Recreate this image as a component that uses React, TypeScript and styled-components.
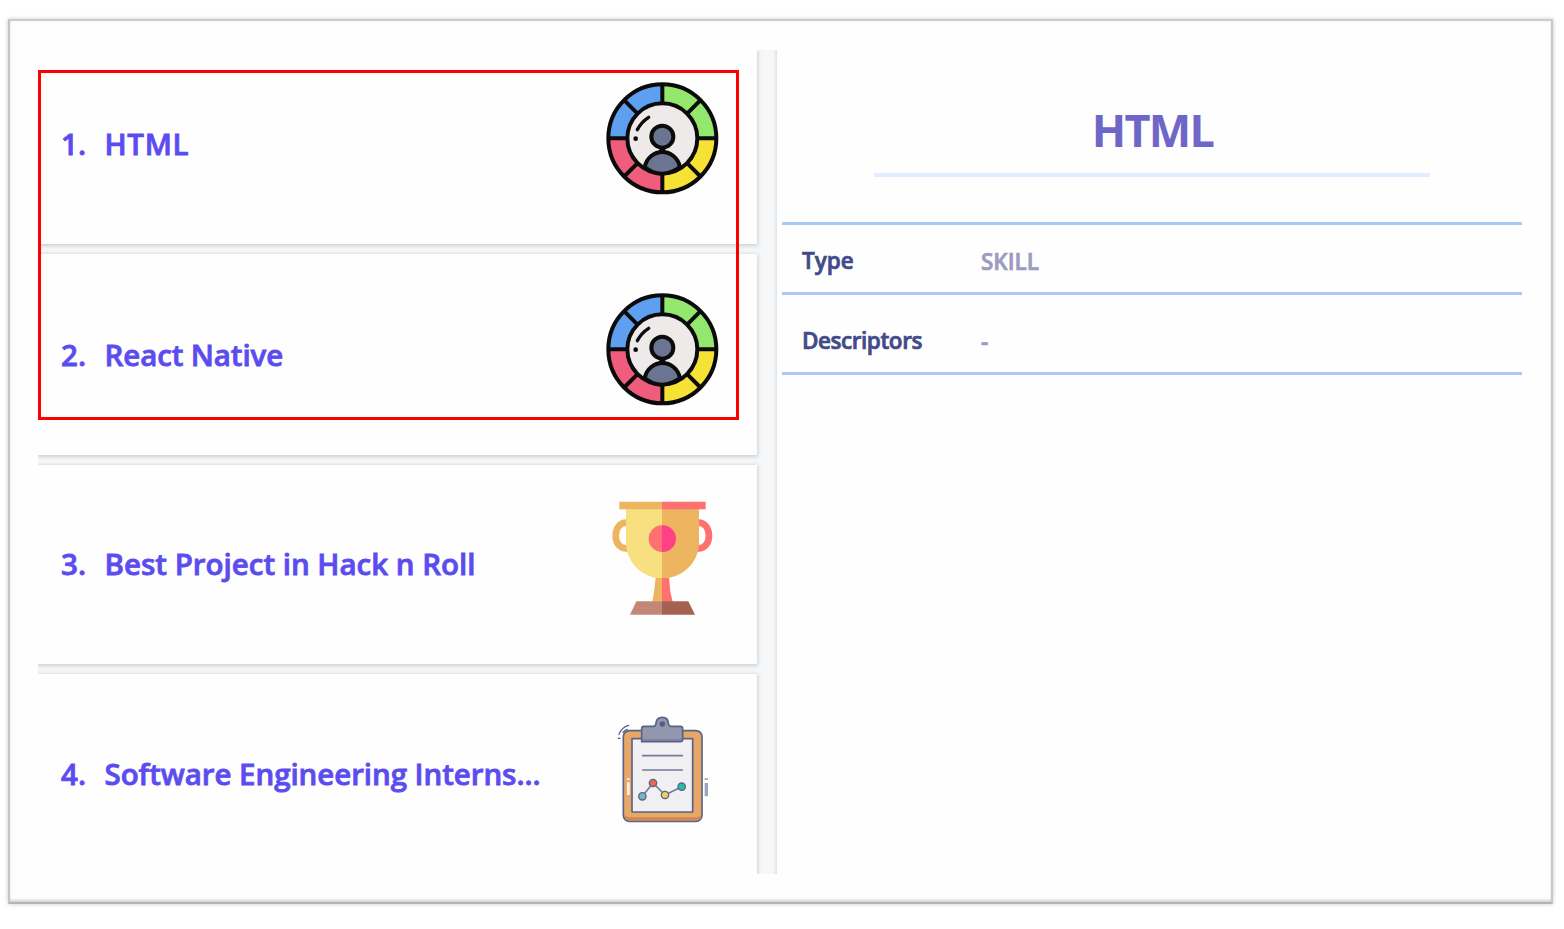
import React from 'react';
import styled, { createGlobalStyle } from 'styled-components';

const GlobalStyle = createGlobalStyle`
  * { box-sizing: border-box; }
  body {
    margin: 0;
    background: #fff;
    font-family: "Open Sans", "Noto Sans", sans-serif;
  }
`;

const Page = styled.div`
  width: 1564px;
  height: 929px;
  padding: 19px 11px 25px 8px;
  background: #fff;
`;

const Frame = styled.main`
  position: relative;
  display: flex;
  width: 1545px;
  height: 885px;
  padding: 29px 28px 28px 28px;
  background: #fefefe;
  border: 2px solid;
  border-color: #cbcbcb #c8c8c8 #b4b4b4 #c4c4c4;
  box-shadow: 0 0 4px rgba(0, 0, 0, 0.22), inset 0 -3px 3px -1px rgba(0, 0, 0, 0.16),
    inset 0 0 3px rgba(0, 0, 0, 0.06);
`;

const ListPane = styled.section`
  display: flex;
  flex-direction: column;
  width: 739px;
  height: 824px;
  gap: 10px;
  padding-right: 20px;
  background: #f6f7f9;
  box-shadow: inset -3px 0 2px -1px #e4e5e7;
  overflow: hidden;
`;

const Card = styled.article<{ $height: number }>`
  flex: none;
  display: flex;
  align-items: flex-end;
  height: ${(p) => p.$height}px;
  padding: 0 32px 44px 23px;
  background: #fefefe;
  color: #5b4cf0;
  font-size: 29.5px;
  font-weight: 600;
  line-height: 40px;
  -webkit-text-stroke: 0.8px currentColor;
  box-shadow: 0 1px 4px 1px rgba(0, 0, 0, 0.16);
`;

const Index = styled.span`
  width: 43.5px;
  margin-bottom: 36px;
`;

const Label = styled.span<{ $spacing: number }>`
  flex: 1;
  margin-bottom: 36px;
  white-space: nowrap;
  letter-spacing: ${(p) => p.$spacing}px;
`;

const Picture = styled.svg`
  flex: none;
  display: block;
  width: 125px;
  height: 125px;
`;

const Selection = styled.div`
  position: absolute;
  left: 28px;
  top: 49px;
  width: 701px;
  height: 350px;
  border: 3px solid #ff0000;
  pointer-events: none;
`;

const DetailPane = styled.section`
  display: flex;
  flex-direction: column;
  width: 745px;
  padding: 50px 0 0 5px;
`;

const Title = styled.h1`
  align-self: center;
  width: 556px;
  height: 77px;
  margin: 0 0 45px;
  padding-left: 1px;
  border-bottom: 4px solid #e4ecff;
  color: #6f67c8;
  text-align: center;
  font-size: 45px;
  font-weight: 700;
  letter-spacing: -1.7px;
  line-height: 60px;
`;

const Table = styled.dl`
  margin: 0;
  border-top: 3px solid #a9c8fb;
`;

const Row = styled.div<{ $height: number }>`
  display: flex;
  align-items: flex-end;
  height: ${(p) => p.$height}px;
  padding: 0 0 16px 20px;
  border-bottom: 3px solid #a9c8fb;
  font-size: 22.5px;
  font-weight: 600;
  line-height: 30px;
  -webkit-text-stroke: 0.7px currentColor;
`;

const Term = styled.dt<{ $spacing?: number }>`
  width: 179px;
  color: #434a8a;
  letter-spacing: ${(p) => p.$spacing ?? 0}px;
`;

const Value = styled.dd`
  position: relative;
  top: 1px;
  margin: 0;
  color: #9c9bc2;
`;

const SkillWheel = () => (
  <Picture viewBox="0 0 375 375">
    <circle cx="187" cy="190" r="160" fill="#eeeaea" />
    <g fill="none" strokeWidth="52">
      <path d="M51 190A136 136 0 0 1 187 54" stroke="#5f9ff0" />
      <path d="M187 54A136 136 0 0 1 323 190" stroke="#92e76c" />
      <path d="M323 190A136 136 0 0 1 187 326" stroke="#f5e234" />
      <path d="M187 326A136 136 0 0 1 51 190" stroke="#f05c7b" />
    </g>
    <g fill="none" stroke="#0b0b0b" strokeWidth="12">
      <circle cx="187" cy="190" r="162" />
      <circle cx="187" cy="190" r="105" />
      <path d="M187 30V84M187 296V350M27 190H81M293 190H347M74 77L112 115M262 265L300 303M300 77L262 115M112 265L74 303" />
      <path d="M134 276C140 248 163 231 187 231S234 248 240 276Q214 295 187 296T134 276Z" fill="#6b7490" />
      <path d="M187 216V232" strokeWidth="18" />
      <circle cx="187" cy="185" r="33" fill="#6b7490" />
      <path d="M112 164Q125 140 146 127" strokeLinecap="round" strokeWidth="10" />
    </g>
    <circle cx="107" cy="191" r="7" fill="#0b0b0b" />
  </Picture>
);

const Trophy = () => (
  <Picture viewBox="-15 0 375 375">
    <path d="M68 83C20 78 20 166 68 160" fill="none" stroke="#edb55f" strokeWidth="20" />
    <path d="M276 83C324 78 324 166 276 160" fill="none" stroke="#ff7070" strokeWidth="20" />
    <path d="M63 42H171V250C111 250 63 200 63 143Z" fill="#f8e080" />
    <path d="M171 42H282V143C282 200 234 250 171 250Z" fill="#edb55f" />
    <path d="M43 20H171V43H43Z" fill="#edb55f" />
    <path d="M171 20H302V43H171Z" fill="#ff7070" />
    <path d="M152 249H171V320H142L147 290Z" fill="#edb55f" />
    <path d="M171 249H192L196 290L203 320H171Z" fill="#ff7070" />
    <path d="M94 319H171V359H75Z" fill="#c38778" />
    <path d="M171 319H250L270 359H171Z" fill="#a66153" />
    <path d="M171 91A40 40 0 0 0 171 171Z" fill="#ff7070" />
    <path d="M171 91H173A40 40 0 0 1 173 171H171Z" fill="#ff3f86" />
  </Picture>
);

const Clipboard = () => (
  <Picture viewBox="-30 -15 375 375">
    <g stroke="#5a6289" strokeWidth="5" strokeLinejoin="round" strokeLinecap="round">
      <rect x="40" y="62" width="236" height="272" rx="18" fill="#e9a766" />
      <path d="M44 312V316Q44 332 58 332H258Q274 332 274 316V312Q270 322 258 322H58Q46 322 44 312Z" fill="#cf8754" stroke="none" />
      <rect x="66" y="86" width="182" height="220" fill="#f0f0f2" />
      <path d="M95 95V56Q95 49 102 49H130Q138 49 138 39Q140 22 157 22T175 39Q176 49 183 49H211Q218 49 218 56V88Q218 95 211 95Z" fill="#9297ad" />
      <path d="M98 90H214" stroke="#777e9b" strokeWidth="4" />
      <circle cx="157" cy="42" r="6" fill="#4d5681" />
      <path d="M98 137H217M98 180H217" stroke="#737a9c" strokeWidth="5" />
      <path d="M97 259L129 219L165 255L215 230" fill="none" stroke="#737a9c" />
      <circle cx="97" cy="259" r="11" fill="#77b8bd" strokeWidth="4" />
      <circle cx="129" cy="219" r="11" fill="#f26450" strokeWidth="4" />
      <circle cx="165" cy="255" r="11" fill="#f5ce55" strokeWidth="4" />
      <circle cx="215" cy="230" r="11" fill="#25bfa6" strokeWidth="4" />
      <path d="M27 73Q35 52 56 46M39 67Q44 60 52 58" fill="none" strokeWidth="4" />
    </g>
    <path d="M24 85H31" stroke="#4d5681" strokeWidth="4" />
    <path d="M55 217V255M55 205V210" stroke="#fff0df" strokeWidth="8" />
    <path d="M289 219V259M289 205V210" stroke="#9da3bf" strokeWidth="10" />
  </Picture>
);

const items = [
  { label: 'HTML', height: 194, spacing: 0.7, Icon: SkillWheel },
  { label: 'React Native', height: 201, spacing: -0.1, Icon: SkillWheel },
  { label: 'Best Project in Hack n Roll', height: 199, spacing: 0, Icon: Trophy },
  { label: 'Software Engineering Interns...', height: 200, spacing: -0.06, Icon: Clipboard },
];

export default function App() {
  return (
    <Page>
      <GlobalStyle />
      <Frame>
        <ListPane>
          {items.map(({ label, height, spacing, Icon }, i) => (
            <Card key={label} $height={height}>
              <Index>{i + 1}.</Index>
              <Label $spacing={spacing}>{label}</Label>
              <Icon />
            </Card>
          ))}
        </ListPane>
        <DetailPane>
          <Title>HTML</Title>
          <Table>
            <Row $height={70}>
              <Term>Type</Term>
              <Value>SKILL</Value>
            </Row>
            <Row $height={80}>
              <Term $spacing={-0.45}>Descriptors</Term>
              <Value>-</Value>
            </Row>
          </Table>
        </DetailPane>
        <Selection />
      </Frame>
    </Page>
  );
}
